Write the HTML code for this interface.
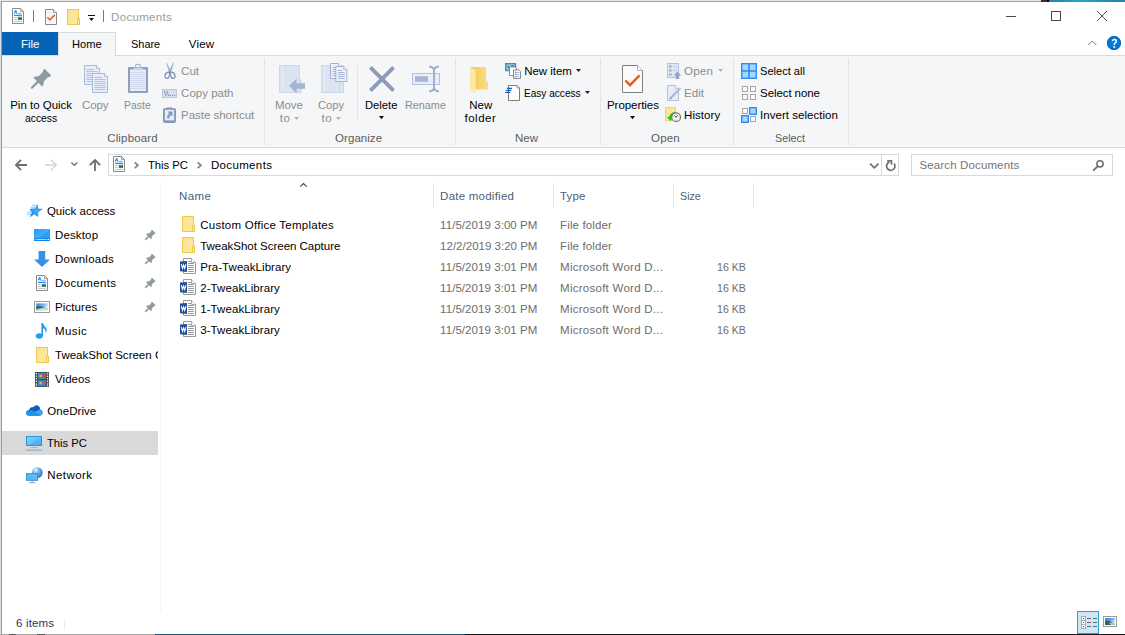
<!DOCTYPE html>
<html><head><meta charset="utf-8">
<style>
html,body{margin:0;padding:0;}
body{width:1125px;height:635px;overflow:hidden;background:#fff;position:relative;font-family:"Liberation Sans",sans-serif;font-size:11.5px;color:#1a1a1a;}
.a{position:absolute;}
.t{position:absolute;white-space:pre;line-height:14px;height:14px;}
.sep{position:absolute;width:1px;background:#e2e3e4;top:58px;height:87px;}
svg{position:absolute;overflow:visible;}
</style></head><body>
<!-- window frame -->
<div class="a" style="left:0;top:0;width:1125px;height:1px;background:#e6e6e6;"></div>
<div class="a" style="left:0;top:1px;width:1125px;height:1px;background:#a6a6a6;"></div>
<div class="a" style="left:0;top:1px;width:1px;height:633px;background:#dcdcdc;"></div>
<div class="a" style="left:1px;top:1px;width:1px;height:633px;background:#9c9c9c;"></div>

<div class="a" style="left:0;top:634px;width:155px;height:1px;background:#a8a8a8;"></div>
<div class="a" style="left:9px;top:634px;width:7px;height:1px;background:#5a5a5a;"></div>
<div class="a" style="left:37px;top:634px;width:8px;height:1px;background:#5a5a5a;"></div>
<div class="a" style="left:155px;top:634px;width:310px;height:1px;background:#1f4e79;"></div>
<div class="a" style="left:465px;top:634px;width:660px;height:1px;background:#1a1a1a;"></div>
<div class="a" style="left:1041px;top:0;width:8px;height:2px;background:#3a2e2e;"></div>
<div class="a" style="left:1047px;top:0;width:2px;height:2px;background:#050505;"></div>
<div class="a" style="left:1049px;top:0;width:76px;height:2px;background:linear-gradient(90deg,#1d84ad,#2aa3cb 40%,#2390b8 70%,#1f86ae);"></div>

<!-- tabs / ribbon -->
<div class="a" style="left:2px;top:32px;width:56px;height:23px;background:#0563b8;"></div>
<div class="a" style="left:2px;top:55px;width:1123px;height:93px;background:#f5f6f7;border-top:1px solid #dadbdc;border-bottom:1px solid #dadbdc;box-sizing:border-box;"></div>
<div class="a" style="left:58px;top:32px;width:58px;height:24px;background:#f5f6f7;border:1px solid #dadbdc;border-bottom:none;box-sizing:border-box;"></div>

<div class="sep" style="left:264px;"></div>
<div class="sep" style="left:455px;"></div>
<div class="sep" style="left:600px;"></div>
<div class="sep" style="left:733px;"></div>
<div class="sep" style="left:848px;"></div>
<div class="a" style="left:357px;top:65px;width:1px;height:55px;background:#e2e3e4;"></div>

<!-- address bar -->
<div class="a" style="left:108px;top:154px;width:791px;height:22px;border:1px solid #d9d9d9;box-sizing:border-box;"></div>
<div class="a" style="left:881px;top:154px;width:1px;height:22px;background:#d9d9d9;"></div>
<div class="a" style="left:911px;top:154px;width:202px;height:22px;border:1px solid #d9d9d9;box-sizing:border-box;"></div>

<!-- nav pane -->
<div class="a" style="left:2px;top:431px;width:156px;height:24px;background:#d9d9d9;"></div>
<div class="a" style="left:160px;top:183px;width:1px;height:428px;background:#f4f4f4;"></div>

<!-- column header separators -->
<div class="a" style="left:433px;top:183px;width:1px;height:25px;background:#e5e5e5;"></div>
<div class="a" style="left:553px;top:183px;width:1px;height:25px;background:#e5e5e5;"></div>
<div class="a" style="left:673px;top:183px;width:1px;height:25px;background:#e5e5e5;"></div>
<div class="a" style="left:753px;top:183px;width:1px;height:25px;background:#e5e5e5;"></div>

<div class="t" style="left:111.1px;top:10.0px;color:#9b9b9b;letter-spacing:0.31px;">Documents</div>
<div class="t" style="left:20.9px;top:37.0px;color:#ffffff;letter-spacing:-0.01px;">File</div>
<div class="t" style="left:72.1px;top:37.0px;color:#000000;transform:scaleX(0.9646);transform-origin:0 0;">Home</div>
<div class="t" style="left:130.8px;top:37.0px;color:#000000;transform:scaleX(0.9515);transform-origin:0 0;">Share</div>
<div class="t" style="left:188.8px;top:37.0px;color:#000000;letter-spacing:0.20px;">View</div>
<div class="t" style="left:10.2px;top:98.3px;color:#000000;letter-spacing:-0.01px;">Pin to Quick</div>
<div class="t" style="left:24.8px;top:110.7px;color:#000000;transform:scaleX(0.8967);transform-origin:0 0;">access</div>
<div class="t" style="left:82.0px;top:98.3px;color:#8c8c8c;letter-spacing:-0.11px;">Copy</div>
<div class="t" style="left:124.0px;top:98.3px;color:#8c8c8c;transform:scaleX(0.9109);transform-origin:0 0;">Paste</div>
<div class="t" style="left:181.1px;top:63.8px;color:#8c8c8c;letter-spacing:-0.00px;">Cut</div>
<div class="t" style="left:181.1px;top:85.8px;color:#8c8c8c;letter-spacing:-0.00px;">Copy path</div>
<div class="t" style="left:181.1px;top:107.8px;color:#8c8c8c;letter-spacing:-0.03px;">Paste shortcut</div>
<div class="t" style="left:107.2px;top:130.8px;color:#5c5c5c;letter-spacing:0.16px;">Clipboard</div>
<div class="t" style="left:275.0px;top:98.3px;color:#8c8c8c;letter-spacing:-0.08px;">Move</div>
<div class="t" style="left:279.7px;top:110.7px;color:#8c8c8c;letter-spacing:0.55px;">to</div>
<div class="t" style="left:318.0px;top:98.3px;color:#8c8c8c;transform:scaleX(0.9680);transform-origin:0 0;">Copy</div>
<div class="t" style="left:321.5px;top:110.7px;color:#8c8c8c;letter-spacing:0.60px;">to</div>
<div class="t" style="left:365.4px;top:98.3px;color:#000000;transform:scaleX(0.9744);transform-origin:0 0;">Delete</div>
<div class="t" style="left:405.2px;top:98.3px;color:#8c8c8c;transform:scaleX(0.9409);transform-origin:0 0;">Rename</div>
<div class="t" style="left:335.1px;top:130.8px;color:#5c5c5c;letter-spacing:0.04px;">Organize</div>
<div class="t" style="left:469.2px;top:98.3px;color:#000000;letter-spacing:0.03px;">New</div>
<div class="t" style="left:464.5px;top:110.7px;color:#000000;letter-spacing:0.50px;">folder</div>
<div class="t" style="left:524.2px;top:63.8px;color:#000000;letter-spacing:-0.03px;">New item</div>
<div class="t" style="left:524.2px;top:85.8px;color:#000000;transform:scaleX(0.8767);transform-origin:0 0;">Easy access</div>
<div class="t" style="left:515.0px;top:130.8px;color:#5c5c5c;letter-spacing:0.03px;">New</div>
<div class="t" style="left:607.0px;top:98.3px;color:#000000;letter-spacing:-0.05px;">Properties</div>
<div class="t" style="left:684.1px;top:63.8px;color:#8c8c8c;letter-spacing:0.21px;">Open</div>
<div class="t" style="left:684.1px;top:85.8px;color:#8c8c8c;letter-spacing:0.04px;">Edit</div>
<div class="t" style="left:684.1px;top:107.8px;color:#000000;letter-spacing:0.05px;">History</div>
<div class="t" style="left:651.1px;top:130.8px;color:#5c5c5c;letter-spacing:0.16px;">Open</div>
<div class="t" style="left:760.1px;top:63.8px;color:#000000;transform:scaleX(0.9620);transform-origin:0 0;">Select all</div>
<div class="t" style="left:760.1px;top:85.8px;color:#000000;letter-spacing:-0.09px;">Select none</div>
<div class="t" style="left:760.1px;top:107.8px;color:#000000;letter-spacing:0.03px;">Invert selection</div>
<div class="t" style="left:775.0px;top:130.8px;color:#5c5c5c;transform:scaleX(0.9384);transform-origin:0 0;">Select</div>
<div class="t" style="left:148.0px;top:157.8px;color:#000000;transform:scaleX(0.9754);transform-origin:0 0;">This PC</div>
<div class="t" style="left:210.9px;top:157.8px;color:#000000;letter-spacing:0.36px;">Documents</div>
<div class="t" style="left:919.5px;top:157.8px;color:#757575;letter-spacing:0.13px;">Search Documents</div>
<div class="t" style="left:46.9px;top:204.3px;color:#000000;letter-spacing:0.00px;">Quick access</div>
<div class="t" style="left:55.0px;top:227.8px;color:#000000;letter-spacing:0.14px;">Desktop</div>
<div class="t" style="left:55.0px;top:251.8px;color:#000000;letter-spacing:0.24px;">Downloads</div>
<div class="t" style="left:55.0px;top:275.8px;color:#000000;letter-spacing:0.35px;">Documents</div>
<div class="t" style="left:55.0px;top:299.8px;color:#000000;letter-spacing:0.09px;">Pictures</div>
<div class="t" style="left:55.0px;top:323.8px;color:#000000;letter-spacing:0.41px;">Music</div>
<div class="t" style="left:55.0px;top:347.8px;color:#000000;letter-spacing:0.01px;width:102.9px;overflow:hidden;">TweakShot Screen Capture</div>
<div class="t" style="left:55.0px;top:371.8px;color:#000000;letter-spacing:0.06px;">Videos</div>
<div class="t" style="left:47.2px;top:403.8px;color:#000000;letter-spacing:0.07px;">OneDrive</div>
<div class="t" style="left:47.2px;top:435.8px;color:#000000;transform:scaleX(0.9754);transform-origin:0 0;">This PC</div>
<div class="t" style="left:47.2px;top:467.8px;color:#000000;letter-spacing:0.44px;">Network</div>
<div class="t" style="left:179.0px;top:188.8px;color:#4c607a;letter-spacing:0.40px;">Name</div>
<div class="t" style="left:440.1px;top:188.8px;color:#4c607a;letter-spacing:0.24px;">Date modified</div>
<div class="t" style="left:560.1px;top:188.8px;color:#4c607a;letter-spacing:0.14px;">Type</div>
<div class="t" style="left:680.0px;top:188.8px;color:#4c607a;transform:scaleX(0.9296);transform-origin:0 0;">Size</div>
<div class="t" style="left:16.0px;top:616.0px;color:#1e3a5f;letter-spacing:0.17px;">6 items</div>
<div class="t" style="left:200.2px;top:217.8px;color:#000000;letter-spacing:0.25px;">Custom Office Templates</div>
<div class="t" style="left:440.1px;top:217.8px;color:#6d6d6d;letter-spacing:0.06px;">11/5/2019 3:00 PM</div>
<div class="t" style="left:560.1px;top:217.8px;color:#6d6d6d;letter-spacing:0.13px;">File folder</div>
<div class="t" style="left:200.2px;top:238.8px;color:#000000;letter-spacing:-0.02px;">TweakShot Screen Capture</div>
<div class="t" style="left:440.1px;top:238.8px;color:#6d6d6d;letter-spacing:0.01px;">12/2/2019 3:20 PM</div>
<div class="t" style="left:560.1px;top:238.8px;color:#6d6d6d;letter-spacing:0.13px;">File folder</div>
<div class="t" style="left:200.2px;top:259.8px;color:#000000;letter-spacing:0.05px;">Pra-TweakLibrary</div>
<div class="t" style="left:440.1px;top:259.8px;color:#6d6d6d;letter-spacing:0.06px;">11/5/2019 3:01 PM</div>
<div class="t" style="left:560.1px;top:259.8px;color:#6d6d6d;letter-spacing:0.26px;">Microsoft Word D...</div>
<div class="t" style="left:717.1px;top:259.8px;color:#6d6d6d;transform:scaleX(0.9193);transform-origin:0 0;">16 KB</div>
<div class="t" style="left:200.2px;top:280.8px;color:#000000;letter-spacing:0.08px;">2-TweakLibrary</div>
<div class="t" style="left:440.1px;top:280.8px;color:#6d6d6d;letter-spacing:0.06px;">11/5/2019 3:01 PM</div>
<div class="t" style="left:560.1px;top:280.8px;color:#6d6d6d;letter-spacing:0.26px;">Microsoft Word D...</div>
<div class="t" style="left:717.1px;top:280.8px;color:#6d6d6d;transform:scaleX(0.9193);transform-origin:0 0;">16 KB</div>
<div class="t" style="left:200.2px;top:301.8px;color:#000000;letter-spacing:0.08px;">1-TweakLibrary</div>
<div class="t" style="left:440.1px;top:301.8px;color:#6d6d6d;letter-spacing:0.06px;">11/5/2019 3:01 PM</div>
<div class="t" style="left:560.1px;top:301.8px;color:#6d6d6d;letter-spacing:0.26px;">Microsoft Word D...</div>
<div class="t" style="left:717.1px;top:301.8px;color:#6d6d6d;transform:scaleX(0.9193);transform-origin:0 0;">16 KB</div>
<div class="t" style="left:200.2px;top:322.8px;color:#000000;letter-spacing:0.08px;">3-TweakLibrary</div>
<div class="t" style="left:440.1px;top:322.8px;color:#6d6d6d;letter-spacing:0.06px;">11/5/2019 3:01 PM</div>
<div class="t" style="left:560.1px;top:322.8px;color:#6d6d6d;letter-spacing:0.26px;">Microsoft Word D...</div>
<div class="t" style="left:717.1px;top:322.8px;color:#6d6d6d;transform:scaleX(0.9193);transform-origin:0 0;">16 KB</div>
<!-- ===== title bar icons ===== -->
<svg style="left:12px;top:8px" width="12" height="16" viewBox="0 0 12 16"><g id="docico">
 <path d="M0.5 0.5H8.5L11.5 3.5V15.5H0.5Z" fill="#fff" stroke="#8a8a8a"/>
 <path d="M8.5 0.5V3.5H11.5" fill="none" stroke="#8a8a8a" stroke-width="0.8"/>
 <path d="M2 5.5L3.8 2L4.6 5.5M2.6 4.2H4.4" stroke="#1e88e0" stroke-width="1" fill="none"/>
 <rect x="5.5" y="4.8" width="4" height="1" fill="#5db4f0"/>
 <rect x="2" y="6.7" width="8" height="1.2" fill="#1e88e0"/>
 <rect x="2" y="8.9" width="2.8" height="0.9" fill="#b8b8b8"/>
 <rect x="2" y="10.9" width="2.8" height="0.9" fill="#b8b8b8"/>
 <rect x="5.8" y="8.7" width="4.2" height="1.3" fill="#4d8df7"/>
 <rect x="5.8" y="10" width="4.2" height="1.8" fill="#2f6a3c"/>
 <rect x="2" y="12.9" width="8" height="0.9" fill="#b8b8b8"/>
</g></svg>
<div class="a" style="left:33px;top:10px;width:1px;height:12px;background:#7a7a7a;"></div>
<svg style="left:45px;top:9px" width="12" height="16" viewBox="0 0 12 16">
 <path d="M0.5 0.5H8.5L11.5 3.5V15.5H0.5Z" fill="#fff" stroke="#858585"/>
 <rect x="2" y="2" width="7.5" height="12" fill="#f3f4f6"/>
 <path d="M8.5 0.5V3.5H11.5" fill="#fff" stroke="#858585" stroke-width="0.8"/>
 <path d="M2.3 8.3L4.9 10.8L9.9 5.9" stroke="#f0561d" stroke-width="1.5" fill="none"/>
</svg>
<svg style="left:67px;top:9px" width="13" height="16" viewBox="0 0 13 16">
 <defs><linearGradient id="fg" x1="0" y1="0" x2="1" y2="1"><stop offset="0" stop-color="#fbe291"/><stop offset="1" stop-color="#fde9a4"/></linearGradient></defs><g id="fldico">
 <rect x="0.5" y="0.5" width="11" height="15" fill="url(#fg)" stroke="#edc94f"/>
 <rect x="10.5" y="9.5" width="2" height="6" fill="#fde9a4" stroke="#edc94f"/>
</g></svg>
<div class="a" style="left:88px;top:15px;width:7px;height:1.3px;background:#111;"></div>
<svg style="left:89px;top:18px" width="5" height="3" viewBox="0 0 5 3"><path d="M0 0H5L2.5 3Z" fill="#111"/></svg>
<div class="a" style="left:103px;top:10px;width:1px;height:12px;background:#7a7a7a;"></div>

<!-- ===== window controls ===== -->
<div class="a" style="left:1006px;top:16px;width:10px;height:1px;background:#4a4a4a;"></div>
<div class="a" style="left:1051px;top:11px;width:10px;height:10px;border:1px solid #4a4a4a;box-sizing:border-box;"></div>
<svg style="left:1097px;top:11px" width="10" height="10" viewBox="0 0 10 10"><path d="M0 0L10 10M10 0L0 10" stroke="#4a4a4a" stroke-width="0.95"/></svg>
<svg style="left:1088px;top:40px" width="9" height="6" viewBox="0 0 9 6"><path d="M0.3 5L4.3 1L8.3 5" stroke="#6a6a6a" stroke-width="0.95" fill="none"/></svg>
<div class="a" style="left:1107px;top:36px;width:14px;height:14px;border-radius:7px;background:radial-gradient(circle,#0079d8 0,#0079d8 72%,#0059ab 100%);"></div>
<svg style="left:1107px;top:36px" width="14" height="14" viewBox="0 0 14 14"><circle cx="7" cy="7" r="6.6" fill="none" stroke="#0060b6" stroke-width="0.8"/><path d="M5.4 5.3Q5.5 3.5 7.3 3.5Q9.3 3.5 9.3 5.2Q9.3 6.4 8 7.2Q7.2 7.8 7.2 9" stroke="#fff" stroke-width="1.5" fill="none"/><rect x="6.4" y="10.1" width="1.7" height="1.7" fill="#fff"/></svg>

<!-- ===== ribbon icons ===== -->
<!-- pin -->
<svg style="left:0;top:0" width="60" height="100" viewBox="0 0 60 100">
 <path d="M31.9 87.7L38 81.6" stroke="#8f9ba3" stroke-width="2.2" stroke-linecap="round"/>
 <path d="M33.2 77.4Q36 76 38.6 76.2L42.9 71.9Q42.4 70.4 44.6 68.8L51.2 75.4Q49.6 77.6 48.1 77.1L43.8 81.4Q44 84 42.4 86.8Z" fill="#8f9ba3"/>
</svg>
<!-- copy -->
<svg style="left:84px;top:65px" width="24" height="28" viewBox="0 0 24 28">
 <g id="pg">
 <path d="M0.5 0.5H12.5L15.5 3.5V19.5H0.5Z" fill="#e9effa" stroke="#aab9d7"/>
 <path d="M12.5 0.5V3.5H15.5" fill="#f4f7fc" stroke="#aab9d7" stroke-width="0.8"/>
 <path d="M2.5 4.5H10M2.5 6.5H13.5M2.5 8.5H13.5M2.5 10.5H13.5M2.5 12.5H13.5M2.5 14.5H13.5M2.5 16.5H13.5" stroke="#b3c1da" stroke-width="1"/>
 </g>
 <use href="#pg" x="8" y="8"/>
</svg>
<!-- paste -->
<svg style="left:128px;top:64px" width="20" height="29" viewBox="0 0 20 29">
 <rect x="5.6" y="0.4" width="4.8" height="4" rx="1.6" fill="none" stroke="#a9b6d0" stroke-width="1.2" transform="translate(2 0)"/>
 <rect x="0" y="3" width="20" height="26" rx="1" fill="#8e9fc0"/>
 <rect x="2" y="5.5" width="16" height="21.5" fill="#e6ecf9"/>
 <path d="M2 8.5H18M2 10.5H18M2 12.5H18M2 14.5H18M2 16.5H18M2 18.5H18M2 20.5H18M2 22.5H18M2 24.5H18" stroke="#d0d9ec" stroke-width="1"/>
 <path d="M4 6.2L6.5 3.4H13.5L16 6.2Z" fill="#c9d3e6"/>
</svg>
<!-- scissors -->
<svg style="left:164px;top:63px" width="12" height="16" viewBox="0 0 12 16">
 <path d="M2.1 0L3.1 0.2L7.3 8.6L5.2 9.4Z" fill="#a6b6d3"/>
 <path d="M9.9 0L8.9 0.2L4.7 8.6L6.8 9.4Z" fill="#9aabcb"/>
 <path d="M5.8 9C2.5 9.2 0.8 11.3 0.9 13.8C1 15.7 3.6 15.9 4.6 14.5C5.6 12.9 5.9 10.8 5.8 9Z" fill="none" stroke="#8193b8" stroke-width="1.3"/>
 <path d="M6.2 9C9.5 9.2 11.2 11.3 11.1 13.8C11 15.7 8.4 15.9 7.4 14.5C6.4 12.9 6.1 10.8 6.2 9Z" fill="none" stroke="#8193b8" stroke-width="1.3"/>
</svg>
<!-- copy path -->
<svg style="left:162px;top:89px" width="15" height="9" viewBox="0 0 15 9">
 <rect x="0.5" y="0.5" width="14" height="8" fill="#d6dff0" stroke="#bcc8e0"/>
 <path d="M2.3 2L4.3 7M4.8 2L6.8 7" stroke="#8595b5" stroke-width="1"/>
 <path d="M8 6.5H9.2M10 6.5H11.2M12 6.5H13.2" stroke="#8595b5" stroke-width="1"/>
</svg>
<!-- paste shortcut -->
<svg style="left:163px;top:107px" width="13" height="16" viewBox="0 0 13 16">
 <rect x="4" y="0" width="5" height="1.4" fill="#b5c1da"/>
 <rect x="0.9" y="1.9" width="11.2" height="13.2" rx="1.2" fill="#e4eaf6" stroke="#8495b9" stroke-width="1.8"/>
 <rect x="1" y="13.4" width="11" height="1.8" fill="#8495b9"/>
 <path d="M5 4.8H9.2V9L7.9 7.7Q6.3 8.6 6 11.2L4.2 10.8Q4.3 8 6.4 6.3Z" fill="#8495b9" stroke="#8495b9" stroke-width="0.4" stroke-linejoin="round"/>
</svg>
<!-- move to -->
<svg style="left:279px;top:65px" width="27" height="29" viewBox="0 0 27 29">
 <rect x="0.5" y="0.5" width="20" height="27" fill="#dbe4f3" stroke="#cdd8ec"/>
 <rect x="21" y="15" width="1.6" height="12.5" fill="#dbe4f3" stroke="#cdd8ec" stroke-width="0.6"/>
 <path d="M3.5 1V27" stroke="#e8eef8" stroke-width="1"/>
 <path d="M10 20.8L17.6 13.4V18.2H26V23.8H17.6V28.6Z" fill="#a4b3d0"/>
</svg>
<!-- copy to -->
<svg style="left:321px;top:63px" width="27" height="31" viewBox="0 0 27 31">
 <rect x="0.5" y="2.5" width="22" height="27" fill="#dbe4f3" stroke="#cdd8ec"/>
 <path d="M3.5 3V29" stroke="#e8eef8" stroke-width="1"/>
 <path d="M18.5 16V29" stroke="#cdd8ec" stroke-width="1"/>
 <g id="pg2">
 <path d="M9.5 0.5H17.5L20.5 3.5V15.5H9.5Z" fill="#eef2fb" stroke="#a3b2d1"/>
 <path d="M17.5 0.5V3.5H20.5" fill="#f6f8fd" stroke="#a3b2d1" stroke-width="0.8"/>
 <path d="M11.5 4.5H16M11.5 6.5H18.5M11.5 8.5H18.5M11.5 10.5H18.5M11.5 12.5H18.5" stroke="#a9b7d3" stroke-width="1"/>
 </g>
 <use href="#pg2" x="5.3" y="3"/>
</svg>
<!-- delete X -->
<svg style="left:369px;top:66px" width="26" height="26" viewBox="0 0 26 26">
 <path d="M1.4 1.4L24.6 24.6M24.6 1.4L1.4 24.6" stroke="#8c9bb9" stroke-width="3.9"/>
</svg>
<!-- rename -->
<svg style="left:412px;top:66px" width="28" height="26" viewBox="0 0 28 26">
 <rect x="0.5" y="7.5" width="27" height="11" fill="#e9eefb" stroke="#b4c2de"/>
 <rect x="3" y="10.2" width="13" height="5.6" fill="#a8b6d3"/>
 <path d="M17 0.7Q21.3 0.7 22 4V22Q21.3 25.3 17 25.3M27 0.7Q22.7 0.7 22 4M22 22Q22.7 25.3 27 25.3" stroke="#9aaac8" stroke-width="1.8" fill="none"/>
</svg>
<!-- new folder -->
<svg style="left:470px;top:67px" width="19" height="27" viewBox="0 0 19 27">
 <defs><linearGradient id="nf" x1="0" y1="0" x2="1" y2="0"><stop offset="0" stop-color="#f2c94f"/><stop offset="1" stop-color="#fbdf85"/></linearGradient></defs>
 <path d="M0 0H16V13.4L18 14.8V22.6H5.6Z" fill="url(#nf)"/>
 <path d="M0 0L5.6 3.2V26.6L0 23.6Z" fill="#fde9a6"/>
</svg>
<!-- new item -->
<svg style="left:505px;top:63px" width="16" height="16" viewBox="0 0 16 16">
 <rect x="0.7" y="0.7" width="9.8" height="6.8" fill="#a9d0ee" stroke="#3c8cc8" stroke-width="1.4"/>
 <rect x="2.5" y="2.5" width="2" height="3" fill="#5a8a5a"/><rect x="6" y="2.3" width="3" height="1.5" fill="#2e6fb5"/>
 <path d="M4.5 3.9H10L11.5 5.4V12.5H4.5Z" fill="#fff" stroke="#8a8a8a"/>
 <path d="M8.5 6.9H14L15.5 8.4V15.5H8.5Z" fill="#fff" stroke="#8a8a8a"/>
 <path d="M9.5 9.5H14.5M9.5 11.5H14.5M9.5 13.5H14.5" stroke="#9cc3ee" stroke-width="1"/>
 <path d="M10.8 7.4V15" stroke="#f08a8a" stroke-width="0.9"/>
</svg>
<!-- easy access -->
<svg style="left:505px;top:85px" width="16" height="16" viewBox="0 0 16 16">
 <path d="M3.5 0.5H12L14.5 3V15.5H3.5Z" fill="#fdfdfd" stroke="#7d7d7d"/>
 <path d="M12 0.5V3H14.5" fill="none" stroke="#9a9a9a" stroke-width="0.8"/>
 <path d="M2 3.4H7M1.2 5.4H6.4M0.2 7.4H5.2" stroke="#1a5fb4" stroke-width="1.1"/>
</svg>
<svg style="left:576px;top:69px" width="5" height="3" viewBox="0 0 5 3"><path d="M0 0H5L2.5 3Z" fill="#222"/></svg>
<svg style="left:585px;top:91px" width="5" height="3" viewBox="0 0 5 3"><path d="M0 0H5L2.5 3Z" fill="#222"/></svg>
<svg style="left:718px;top:69px" width="5" height="3" viewBox="0 0 5 3"><path d="M0 0H5L2.5 3Z" fill="#b4b4b4"/></svg>
<svg style="left:294px;top:116.5px" width="5" height="3" viewBox="0 0 5 3"><path d="M0 0H5L2.5 3Z" fill="#b4b4b4"/></svg>
<svg style="left:336px;top:116.5px" width="5" height="3" viewBox="0 0 5 3"><path d="M0 0H5L2.5 3Z" fill="#b4b4b4"/></svg>
<svg style="left:379px;top:116px" width="5" height="3" viewBox="0 0 5 3"><path d="M0 0H5L2.5 3.2Z" fill="#111"/></svg>
<svg style="left:630px;top:116px" width="5" height="3" viewBox="0 0 5 3"><path d="M0 0H5L2.5 3.2Z" fill="#111"/></svg>
<!-- properties -->
<svg style="left:622px;top:65px" width="21" height="28" viewBox="0 0 21 28">
 <path d="M0.5 0.5H15.5L20.5 5.5V27.5H0.5Z" fill="#fbfbfb" stroke="#7f7f7f"/>
 <path d="M15.5 0.5V5.5H20.5" fill="#fff" stroke="#9a9a9a" stroke-width="0.8"/>
 <path d="M3.4 15.4L8 20.2L17.6 10.4" stroke="#f25a1d" stroke-width="2.4" fill="none"/>
</svg>
<!-- open -->
<svg style="left:667px;top:63px" width="15" height="16" viewBox="0 0 15 16">
 <rect x="0.5" y="0.5" width="11" height="14" fill="#e0e7f4" stroke="#b4c2de"/>
 <rect x="2" y="2.3" width="2.6" height="2.4" fill="#a4b3d0"/><rect x="2" y="6.3" width="2.6" height="2.4" fill="#a4b3d0"/><rect x="2" y="10.3" width="2.6" height="2.4" fill="#a4b3d0"/>
 <path d="M6 3.5H10M6 7.5H10" stroke="#c3cee4" stroke-width="1"/>
 <path d="M10.5 8.6L14.4 12.6H12.2V16H8.8V12.6H6.6Z" fill="#93a4c3"/>
</svg>
<!-- edit -->
<svg style="left:667px;top:85px" width="15" height="16" viewBox="0 0 15 16">
 <path d="M0.5 0.5H8.5L11.5 3.5V15.5H0.5Z" fill="#e6ecf8" stroke="#b4c2de"/>
 <path d="M8.5 0.5V3.5H11.5" fill="#f4f7fc" stroke="#b4c2de" stroke-width="0.8"/>
 <path d="M3 13.6L12.6 4" stroke="#aebbd6" stroke-width="2.2"/>
 <path d="M2 14.8L3.6 11.8L5 13.2Z" fill="#93a4c3"/>
 <circle cx="13" cy="3.6" r="1.2" fill="#b9c5dd"/>
</svg>
<!-- history -->
<svg style="left:665px;top:107px" width="17" height="16" viewBox="0 0 17 16">
 <defs><radialGradient id="ck" cx="0.4" cy="0.35" r="0.7"><stop offset="0" stop-color="#ffffff"/><stop offset="1" stop-color="#dfe3e8"/></radialGradient></defs>
 <rect x="0.5" y="0.5" width="10" height="13" fill="#fde79a" stroke="#f3d263"/>
 <path d="M10.6 5Q5.6 5.4 4.3 10.2L2.3 10L5.3 13.6L8.5 10.6L6.7 10.4Q7.4 7.8 10.6 7.4Z" fill="#25c025" stroke="#1e9e1e" stroke-width="0.4"/>
 <circle cx="11.2" cy="10.3" r="4.4" fill="url(#ck)" stroke="#7d7d7d" stroke-width="1.1"/>
 <path d="M9.5 8.6L10.7 10.4L12.7 8.2" stroke="#333" stroke-width="0.9" fill="none"/>
 <path d="M11.2 6.7V7.5M11.2 13.1V13.9M13.9 10.3H14.7" stroke="#777" stroke-width="0.7"/>
</svg>
<!-- select all -->
<svg style="left:741px;top:63px" width="16" height="16" viewBox="0 0 16 16">
 <rect x="0" y="0" width="16" height="16" fill="#2b8ef0"/>
 <rect x="1.4" y="1.4" width="5.8" height="5.8" fill="#a8d5fc"/><rect x="8.8" y="1.4" width="5.8" height="5.8" fill="#a8d5fc"/>
 <rect x="1.4" y="8.8" width="5.8" height="5.8" fill="#a8d5fc"/><rect x="8.8" y="8.8" width="5.8" height="5.8" fill="#a8d5fc"/>
</svg>
<!-- select none -->
<svg style="left:741px;top:85px" width="16" height="16" viewBox="0 0 16 16">
 <g fill="#f9f9f9" stroke="#a6a6a6"><rect x="1.5" y="1.5" width="5" height="5"/><rect x="9.5" y="1.5" width="5" height="5"/><rect x="1.5" y="9.5" width="5" height="5"/><rect x="9.5" y="9.5" width="5" height="5"/></g>
</svg>
<!-- invert selection -->
<svg style="left:741px;top:107px" width="16" height="16" viewBox="0 0 16 16">
 <g fill="#f9f9f9" stroke="#a6a6a6"><rect x="1.5" y="1.5" width="5" height="5"/><rect x="9.5" y="9.5" width="5" height="5"/></g>
 <g fill="#a8d5fc" stroke="#2b8ef0" stroke-width="1.4"><rect x="8.7" y="0.7" width="6.6" height="6.6"/><rect x="0.7" y="8.7" width="6.6" height="6.6"/></g>
</svg>

<!-- ===== address bar ===== -->
<svg style="left:15px;top:159px" width="12" height="12" viewBox="0 0 12 12"><path d="M6 0.8L0.9 6L6 11.2M0.9 6H12" stroke="#6e6e6e" stroke-width="1.8" fill="none"/></svg>
<svg style="left:45px;top:159px" width="12" height="12" viewBox="0 0 12 12"><path d="M6 0.8L11.1 6L6 11.2M11.1 6H0" stroke="#d4d4d4" stroke-width="1.6" fill="none"/></svg>
<svg style="left:71px;top:162px" width="7" height="4" viewBox="0 0 7 4"><path d="M0.4 0.5L3.4 3.3L6.4 0.5" stroke="#6e6e6e" stroke-width="1.3" fill="none"/></svg>
<svg style="left:89px;top:159px" width="12" height="12" viewBox="0 0 12 12"><path d="M0.8 6.2L6 1L11.2 6.2M6 1V12" stroke="#6e6e6e" stroke-width="1.8" fill="none"/></svg>
<svg style="left:113px;top:156px" width="12" height="16" viewBox="0 0 12 16"><use href="#docico"/></svg>
<svg style="left:134px;top:162px" width="5" height="7" viewBox="0 0 5 7"><path d="M0.7 0.4L3.9 3.3L0.7 6.2" stroke="#808080" stroke-width="1.7" fill="none"/></svg>
<svg style="left:197px;top:162px" width="5" height="7" viewBox="0 0 5 7"><path d="M0.7 0.4L3.9 3.3L0.7 6.2" stroke="#808080" stroke-width="1.7" fill="none"/></svg>
<svg style="left:869.6px;top:163px" width="9" height="6" viewBox="0 0 9 6"><path d="M0.1 0.6L4.3 4.9L8.5 0.6" stroke="#6e6e6e" stroke-width="1.7" fill="none"/></svg>
<svg style="left:885px;top:160px" width="11" height="11" viewBox="0 0 11 11"><path d="M9.1 3.5A4.2 4.2 0 1 1 4.4 2.1" stroke="#6e6e6e" stroke-width="1.7" fill="none"/><path d="M2.2 0.8H6.5V4.6" stroke="#6e6e6e" stroke-width="1.7" fill="none"/></svg>
<svg style="left:1092px;top:160px" width="12" height="11" viewBox="0 0 12 11"><circle cx="8" cy="3.8" r="3.15" stroke="#6e6e6e" stroke-width="1.5" fill="none"/><path d="M5.6 6.3L1.1 10.6" stroke="#6e6e6e" stroke-width="1.8"/></svg>

<!-- ===== nav pane icons ===== -->
<!-- quick access star -->
<svg style="left:24px;top:200px" width="24" height="22" viewBox="0 0 24 22">
 <defs><radialGradient id="stg" cx="0.5" cy="0.5" r="0.5"><stop offset="0" stop-color="#3ab2ff"/><stop offset="1" stop-color="#1c8ce6"/></radialGradient></defs>
 <path d="M13.5 4.8L13.9 9L18.2 9.1L13.9 12.1L13.8 16.5L10.4 13.9L6.1 16.8L8 12.5L5.9 9.1L11 8.7Z" fill="url(#stg)" stroke="#1c8ce6" stroke-width="0.5" stroke-linejoin="round"/>
 <path d="M8.4 5.3H12M7 7.3H10.6M3.8 12.3H7M3 14.3H6.6" stroke="#7cc4f6" stroke-width="0.9" stroke-linecap="round"/>
</svg>
<!-- desktop -->
<svg style="left:34px;top:229px" width="16" height="12" viewBox="0 0 16 12">
 <defs><linearGradient id="dk" x1="0" y1="0" x2="1" y2="1"><stop offset="0" stop-color="#1f97f5"/><stop offset="0.5" stop-color="#43b0fc"/><stop offset="0.52" stop-color="#269ff7"/><stop offset="1" stop-color="#269ff7"/></linearGradient></defs>
 <rect x="0" y="0" width="16" height="12" rx="0.6" fill="url(#dk)"/>
 <rect x="0" y="9.2" width="16" height="2.8" fill="#1a7fe0"/>
 <rect x="1.4" y="10" width="1" height="1" fill="#fff"/><rect x="3.4" y="10.2" width="8.4" height="0.8" fill="#e8f3fe"/><rect x="12.6" y="10" width="1" height="1" fill="#fff"/><rect x="14" y="10" width="1" height="1" fill="#fff"/>
</svg>
<!-- downloads -->
<svg style="left:34px;top:251px" width="16" height="16" viewBox="0 0 16 16"><path d="M4.6 0H11.2V8.4H16L8 16L0 8.4H4.6Z" fill="#3491e3"/></svg>
<!-- documents -->
<svg style="left:36px;top:275px" width="12" height="16" viewBox="0 0 12 16"><use href="#docico"/></svg>
<!-- pictures -->
<svg style="left:34px;top:301px" width="16" height="12" viewBox="0 0 16 12">
 <defs><linearGradient id="sk2" x1="0" y1="0" x2="1" y2="0.5"><stop offset="0" stop-color="#3c86ea"/><stop offset="0.6" stop-color="#7db4f0"/><stop offset="1" stop-color="#e4f0fa"/></linearGradient></defs>
 <rect x="0.5" y="0.5" width="15" height="11" fill="#fff" stroke="#9a9a9a"/>
 <rect x="2.2" y="2.4" width="11.6" height="7.2" fill="url(#sk2)"/>
 <path d="M2.2 5.6Q5 3.8 8 5.6T13.8 8V8.8H2.2Z" fill="#3d6e58"/>
 <path d="M6 7.4Q10 6.6 13.8 8V9.6H2.2V8.6Z" fill="#dfe9f0" opacity="0.9"/>
</svg>
<!-- music -->
<svg style="left:35px;top:323px" width="13" height="16" viewBox="0 0 13 16">
 <ellipse cx="4.3" cy="13" rx="3.5" ry="2.7" fill="#1e9bf5"/>
 <path d="M6.4 13V0H8Q8.4 2.6 10.6 4.6Q12.8 7 10.6 10.4Q11.2 7 8 5V13Z" fill="#1e9bf5"/>
</svg>
<!-- folder -->
<svg style="left:36px;top:347px" width="13" height="16" viewBox="0 0 13 16"><use href="#fldico"/></svg>
<!-- videos -->
<svg style="left:35px;top:372px" width="14" height="15" viewBox="0 0 14 15">
 <rect x="0" y="0" width="14" height="15" fill="#4a4a4a"/>
 <rect x="3" y="0.8" width="8" height="6.2" fill="#2f7fe0"/><rect x="3" y="8" width="8" height="6.2" fill="#2f7fe0"/>
 <rect x="3" y="5.8" width="8" height="1.2" fill="#4f8f4f"/><rect x="3" y="13" width="8" height="1.2" fill="#4f8f4f"/>
 <rect x="4.4" y="2.6" width="2.4" height="2.6" fill="#e8b63a"/><rect x="7.4" y="2" width="2.4" height="3" fill="#d8503a"/>
 <rect x="4.4" y="9.8" width="2.4" height="2.6" fill="#e8b63a"/><rect x="7.4" y="9.2" width="2.4" height="3" fill="#d8503a"/>
 <g fill="#f2f2f2"><rect x="0.8" y="1" width="1.3" height="1.3"/><rect x="0.8" y="3.6" width="1.3" height="1.3"/><rect x="0.8" y="6.2" width="1.3" height="1.3"/><rect x="0.8" y="8.8" width="1.3" height="1.3"/><rect x="0.8" y="11.4" width="1.3" height="1.3"/><rect x="0.8" y="13.4" width="1.3" height="1"/>
 <rect x="11.9" y="1" width="1.3" height="1.3"/><rect x="11.9" y="3.6" width="1.3" height="1.3"/><rect x="11.9" y="6.2" width="1.3" height="1.3"/><rect x="11.9" y="8.8" width="1.3" height="1.3"/><rect x="11.9" y="11.4" width="1.3" height="1.3"/><rect x="11.9" y="13.4" width="1.3" height="1"/></g>
</svg>
<!-- onedrive -->
<svg style="left:26px;top:405px" width="17" height="11" viewBox="0 0 17 11">
 <path d="M3.4 10.8Q0 10.6 0.1 7.6Q0.4 5.2 3 5Q4 1.8 7.2 2.4Q9 -0.4 12 0.8Q14 1.8 14 4.4Q16.8 5 16.6 7.8Q16.2 10.6 13.6 10.8Z" fill="#1a7ad4"/>
 <path d="M3 5Q4 1.8 7.2 2.4Q9 -0.4 12 0.8Q14 1.8 14 4.4L9 6.8Z" fill="#0f5fb8"/>
 <path d="M3.4 10.8Q0 10.6 0.1 7.6Q0.4 5.2 3 5Q5 4.6 6.4 5.6L14.6 10.6Q14 10.8 13.6 10.8Z" fill="#2590e6"/>
 <path d="M6.4 5.6L9 6.8L14 4.4Q16.8 5 16.6 7.8Q16.2 10.2 14.6 10.6Z" fill="#38a7f0"/>
</svg>
<!-- this pc -->
<svg style="left:26px;top:436px" width="16" height="15" viewBox="0 0 16 15">
 <defs><linearGradient id="pc" x1="0" y1="0" x2="1" y2="1"><stop offset="0" stop-color="#7fd0fb"/><stop offset="0.55" stop-color="#62c1fa"/><stop offset="0.56" stop-color="#4fb4f6"/><stop offset="1" stop-color="#4fb4f6"/></linearGradient></defs>
 <rect x="0.5" y="0.5" width="15" height="9" fill="url(#pc)" stroke="#2f90de"/>
 <rect x="4.5" y="11" width="7" height="1" fill="#9db6d2"/>
 <rect x="0" y="13.6" width="16" height="1" fill="#7fa6d0"/>
</svg>
<!-- network -->
<svg style="left:26px;top:467px" width="17" height="17" viewBox="0 0 17 17">
 <defs><radialGradient id="gl" cx="0.35" cy="0.3" r="0.8"><stop offset="0" stop-color="#cfe6f8"/><stop offset="0.6" stop-color="#4f9ad8"/><stop offset="1" stop-color="#2d6fb5"/></radialGradient></defs>
 <circle cx="11.3" cy="5.6" r="5.4" fill="url(#gl)"/>
 <path d="M8 2.4Q10 1 12 2Q11 4 9 4.4Z" fill="#e6f1fa" opacity="0.8"/>
 <rect x="0.5" y="6.7" width="11" height="6.6" fill="#5bbaf8" stroke="#2f90de"/>
 <rect x="5.4" y="13.6" width="1.4" height="1.8" fill="#8aa6c4"/>
 <rect x="3" y="15.2" width="6.2" height="1" fill="#8aa6c4"/>
</svg>
<!-- pins -->
<svg style="left:0;top:0" width="160" height="320" viewBox="0 0 160 320">
 <g id="sp"><path d="M145.6 239.4L148.8 236.2" stroke="#8f9aa3" stroke-width="1.5" stroke-linecap="round"/>
 <path d="M146.2 234.2Q147.8 233.4 149.2 233.6L151.3 231.5Q151 230.8 152 229.9L155.4 233.3Q154.5 234.3 153.9 234L151.8 236.2Q152 237.6 151.1 239.1Z" fill="#8f9aa3" stroke="#8f9aa3" stroke-width="0.5"/></g>
 <use href="#sp" y="24"/><use href="#sp" y="48"/><use href="#sp" y="72"/>
</svg>

<!-- ===== file list icons ===== -->
<svg style="left:300px;top:183px" width="7" height="4" viewBox="0 0 7 4"><path d="M0.3 3.7L3.5 0.5L6.7 3.7" stroke="#444" stroke-width="1.15" fill="none"/></svg>
<svg style="left:182px;top:216px" width="13" height="16" viewBox="0 0 13 16"><use href="#fldico"/></svg>
<svg style="left:182px;top:237px" width="13" height="16" viewBox="0 0 13 16"><use href="#fldico"/></svg>
<svg style="left:180px;top:258px" width="16" height="16" viewBox="0 0 16 16"><g id="wrd">
 <path d="M3.5 0.5H11.5L15.5 4.5V15.5H3.5Z" fill="#fff" stroke="#999"/>
 <path d="M11.5 0.5V4.5H15.5" fill="#fff" stroke="#999" stroke-width="0.8"/>
 <path d="M8.1 3.5H11M8.1 5.5H13.8M8.1 7.5H13.8M8.1 9.5H13.8M8.1 11.5H13.8M8.1 13.5H13.8" stroke="#8a8a8a" stroke-width="0.9"/>
 <path d="M0 3.5L7 3V14L0 13.2Z" fill="#24509a"/>
 <path d="M1.3 6.2L2.5 10.4L3.6 7L4.7 10.4L5.9 6.2" stroke="#fff" stroke-width="1.1" fill="none"/></g>
</svg>
<svg style="left:180px;top:279px" width="16" height="16" viewBox="0 0 16 16"><use href="#wrd"/></svg>
<svg style="left:180px;top:300px" width="16" height="16" viewBox="0 0 16 16"><use href="#wrd"/></svg>
<svg style="left:180px;top:321px" width="16" height="16" viewBox="0 0 16 16"><use href="#wrd"/></svg>

<!-- ===== status bar ===== -->
<div class="a" style="left:64px;top:619px;width:1px;height:11px;background:#ececec;"></div>
<div class="a" style="left:1077px;top:611px;width:22px;height:23px;background:#cce8f6;border:1px solid #26a0da;box-sizing:border-box;"></div>
<svg style="left:1081px;top:616px" width="16" height="13" viewBox="0 0 16 13">
 <rect x="0.4" y="0.4" width="4.2" height="12.2" fill="#fff" stroke="#9a9a9a" stroke-width="0.8"/>
 <path d="M0.4 4.4H4.6M0.4 8.4H4.6" stroke="#9a9a9a" stroke-width="0.8"/>
 <rect x="2" y="2" width="1" height="1" fill="#3c6e4e"/><rect x="2" y="6" width="1" height="1" fill="#4d8df7"/><rect x="2" y="10" width="1" height="1" fill="#e02020"/>
 <path d="M6 2.5H10M12 2.5H16M6 6.5H10M12 6.5H16M6 10.5H10M12 10.5H16" stroke="#6a6a6a" stroke-width="1"/>
</svg>
<svg style="left:1103px;top:616px" width="14" height="11" viewBox="0 0 14 11">
 <defs><linearGradient id="sk" x1="0" y1="0" x2="1" y2="0.6"><stop offset="0" stop-color="#2f7fec"/><stop offset="0.6" stop-color="#69aaf0"/><stop offset="1" stop-color="#e4f0fa"/></linearGradient></defs>
 <rect x="0.5" y="0.5" width="13" height="10" fill="#fff" stroke="#9a9a9a"/>
 <rect x="2" y="2" width="10" height="7" fill="url(#sk)"/>
 <path d="M2 5.6Q4 3.8 6.4 5T10.6 7.4L12 8V9H2Z" fill="#35674f"/>
 <path d="M6 6.6Q9 6.4 12 7.8V9H8Z" fill="#b9d3e2" opacity="0.85"/>
</svg>

</body></html>
